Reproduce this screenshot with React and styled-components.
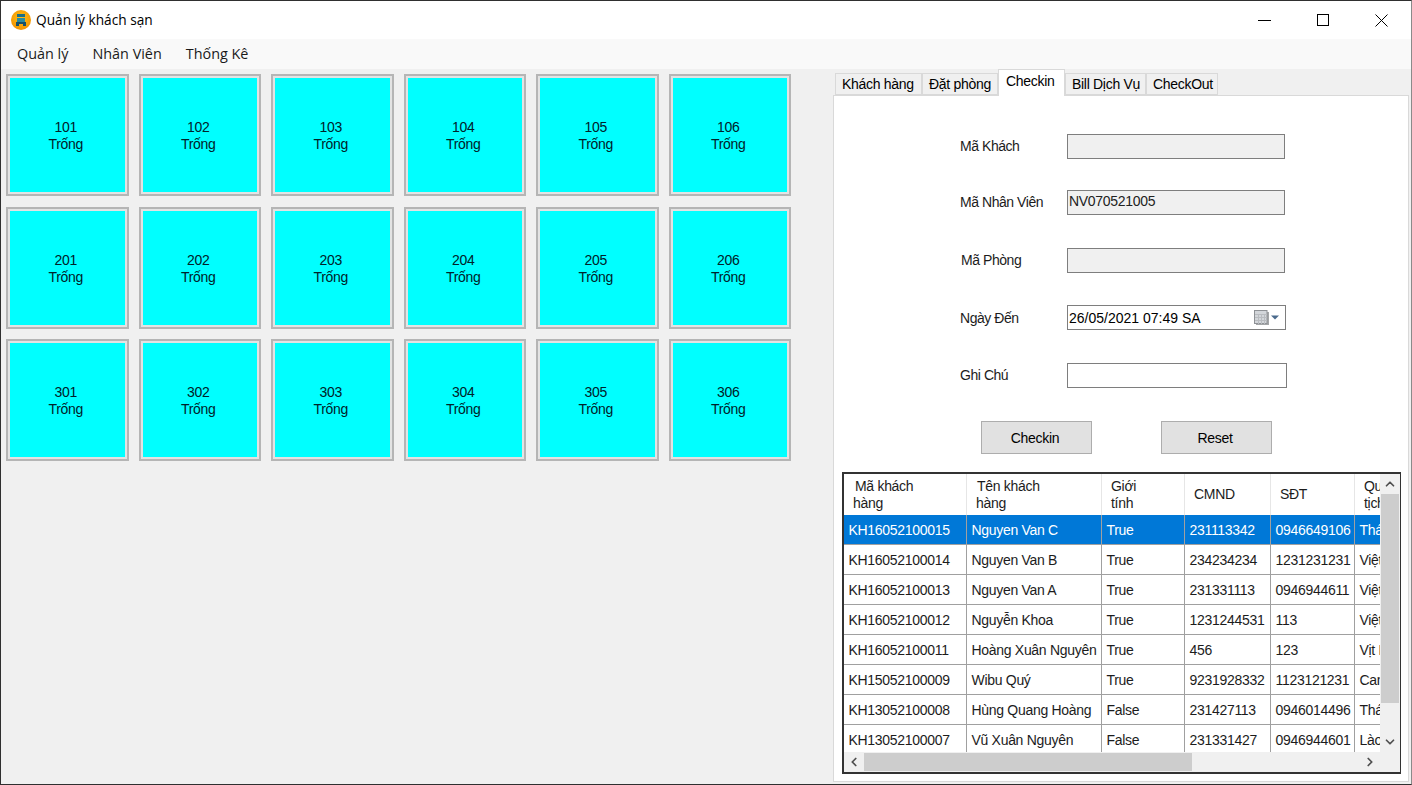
import styled, { createGlobalStyle } from "styled-components";
import { ChevronUp, ChevronDown, ChevronLeft, ChevronRight } from "lucide-react";

const floors = [
    ["101", "102", "103", "104", "105", "106"],
    ["201", "202", "203", "204", "205", "206"],
    ["301", "302", "303", "304", "305", "306"],
];

const tabs = [
    { label: "Khách hàng", width: 87 },
    { label: "Đặt phòng", width: 76 },
    { label: "Checkin", width: 67, active: true },
    { label: "Bill Dịch Vụ", width: 81 },
    { label: "CheckOut", width: 72 },
];

const columns = [
    { lines: ["Mã khách", "hàng"], width: 123, indent: 2 },
    { lines: ["Tên khách", "hàng"], width: 135, indent: 1 },
    { lines: ["Giới", "tính"], width: 83, indent: 0 },
    { lines: ["CMND"], width: 86, indent: 0 },
    { lines: ["SĐT"], width: 84, indent: 0 },
    { lines: ["Quốc", "tịch"], width: 60, indent: 0 },
];

const customers = [
    ["KH16052100015", "Nguyen Van C", "True", "231113342", "0946649106", "Thái Lan"],
    ["KH16052100014", "Nguyen Van B", "True", "234234234", "1231231231", "Việt Nam"],
    ["KH16052100013", "Nguyen Van A", "True", "231331113", "0946944611", "Việt Nam"],
    ["KH16052100012", "Nguyễn Khoa", "True", "1231244531", "113", "Việt Nam"],
    ["KH16052100011", "Hoàng Xuân Nguyên", "True", "456", "123", "Vịt Nam"],
    ["KH15052100009", "Wibu Quý", "True", "9231928332", "1123121231", "Canada"],
    ["KH13052100008", "Hùng Quang Hoàng", "False", "231427113", "0946014496", "Thái Lan"],
    ["KH13052100007", "Vũ Xuân Nguyên", "False", "231331427", "0946944601", "Lào"],
];

const Logo = () => (
    <svg width="20" height="20" viewBox="0 0 20 20">
        <defs>
            <radialGradient id="logoFill" cx="50%" cy="40%" r="60%">
                <stop offset="0%" stopColor="#ffc21a" />
                <stop offset="100%" stopColor="#f39200" />
            </radialGradient>
        </defs>
        <circle cx="10" cy="10" r="10" fill="url(#logoFill)" />
        <rect x="6" y="4" width="8" height="3" fill="#1d6f86" />
        <rect x="6" y="8" width="8" height="4" fill="#2a8ca0" />
        <rect x="5" y="12" width="10" height="2" fill="#17506b" />
        <rect x="5" y="14" width="3" height="2" fill="#17506b" />
        <rect x="12" y="14" width="3" height="2" fill="#17506b" />
    </svg>
);

const CalendarIcon = () => (
    <svg width="28" height="17" viewBox="0 0 28 17">
        <rect x="3" y="3" width="13" height="13" fill="#a4a6a8" />
        <rect x="1.500" y="1.500" width="12.500" height="13" fill="#d3d6da" stroke="#8f9296" />
        <path d="M2 5.500H14M2 8.500H14M2 11.500H14M5.500 5V15M8.500 5V15M11.500 5V15" stroke="#b9bcc0" strokeWidth="1" />
        <path d="M18 6.500H26L22 10.500Z" fill="#4a6a8c" />
    </svg>
);

const WindowIcon = ({ kind }) => (
    <svg width="13" height="13" viewBox="0 0 13 13" fill="none" stroke="#000" strokeWidth="1">
        {kind === "min" && <path d="M0 6.500H13" />}
        {kind === "max" && <rect x="0.500" y="0.500" width="11" height="11" />}
        {kind === "close" && <path d="M0.500 0.500L12.500 12.500M12.500 0.500L0.500 12.500" />}
    </svg>
);

const App = () => {
    return (
        <Window>
            <GlobalStyle />
            <TitleBar>
                <Logo />
                <Title>Quản lý khách sạn</Title>
                <WindowButtons>
                    <WindowButton><WindowIcon kind="min" /></WindowButton>
                    <WindowButton><WindowIcon kind="max" /></WindowButton>
                    <WindowButton><WindowIcon kind="close" /></WindowButton>
                </WindowButtons>
            </TitleBar>

            <MenuBar>
                <MenuItem>Quản lý</MenuItem>
                <MenuItem>Nhân Viên</MenuItem>
                <MenuItem>Thống Kê</MenuItem>
            </MenuBar>

            <Main>
                <Rooms>
                    {floors.flat().map((room) => (
                        <Room key={room}>
                            <span>{room}</span>
                            <span>Trống</span>
                        </Room>
                    ))}
                </Rooms>

                <Side>
                    <TabStrip>
                        {tabs.map((tab) => (
                            <Tab key={tab.label} $width={tab.width} $active={tab.active}>
                                {tab.label}
                            </Tab>
                        ))}
                    </TabStrip>

                    <Panel>
                        <Field $top={38}>
                            <Label>Mã Khách</Label>
                            <ReadOnlyBox />
                        </Field>
                        <Field $top={31}>
                            <Label>Mã Nhân Viên</Label>
                            <ReadOnlyBox>NV070521005</ReadOnlyBox>
                        </Field>
                        <Field $top={33}>
                            <Label $indent={1}>Mã Phòng</Label>
                            <ReadOnlyBox />
                        </Field>
                        <Field $top={32}>
                            <Label $drop>Ngày Đến</Label>
                            <DateBox>
                                26/05/2021 07:49 SA
                                <CalendarIcon />
                            </DateBox>
                        </Field>
                        <Field $top={33}>
                            <Label>Ghi Chú</Label>
                            <NoteBox />
                        </Field>

                        <Actions>
                            <ActionButton>Checkin</ActionButton>
                            <ActionButton>Reset</ActionButton>
                        </Actions>

                        <DataGrid>
                            <TableClip>
                                <Table>
                                    <colgroup>
                                        {columns.map((col) => (
                                            <col key={col.lines[0]} width={col.width} />
                                        ))}
                                    </colgroup>
                                    <thead>
                                        <tr>
                                            {columns.map((col) => (
                                                <HeadCell key={col.lines[0]} $indent={col.indent}>
                                                    {col.lines.map((line, i) => (
                                                        <span key={line}>
                                                            {i > 0 && <br />}
                                                            {line}
                                                        </span>
                                                    ))}
                                                </HeadCell>
                                            ))}
                                        </tr>
                                    </thead>
                                    <tbody>
                                        {customers.map((row, index) => (
                                            <tr key={row[0]}>
                                                {row.map((value, cell) => (
                                                    <Cell key={cell} $selected={index === 0}>
                                                        {value}
                                                    </Cell>
                                                ))}
                                            </tr>
                                        ))}
                                    </tbody>
                                </Table>
                            </TableClip>

                            <VerticalBar>
                                <ChevronUp size={14} strokeWidth={3} color="#505050" />
                                <VerticalThumb />
                                <ChevronDown size={14} strokeWidth={3} color="#505050" />
                            </VerticalBar>
                            <HorizontalBar>
                                <ChevronLeft size={14} strokeWidth={3} color="#505050" />
                                <HorizontalThumb />
                                <ChevronRight size={14} strokeWidth={3} color="#505050" />
                            </HorizontalBar>
                            <Corner />
                        </DataGrid>
                    </Panel>
                </Side>
            </Main>
        </Window>
    );
};

export default App;

const GlobalStyle = createGlobalStyle`
    html, body {
        margin: 0;
        padding: 0;
        background: #f0f0f0;
    }
`;

const Window = styled.div`
    box-sizing: border-box;
    width: 1412px;
    height: 785px;
    display: flex;
    flex-direction: column;
    overflow: hidden;
    border: 1px solid #2f2f2f;
    border-right-color: #8a8a8a;
    background: #f0f0f0;
    color: #000;
    font-family: "Liberation Sans", Arial, sans-serif;
    font-size: 14px;
    letter-spacing: -0.300px;
`;

const TitleBar = styled.div`
    box-sizing: border-box;
    height: 38px;
    display: flex;
    align-items: center;
    padding-left: 10px;
    background: #fff;
    flex-shrink: 0;
    letter-spacing: 0;
`;

const Title = styled.span`
    margin: 0 0 2px 5px;
    font-family: "Open Sans", sans-serif;
    font-size: 13.700px;
`;

const WindowButtons = styled.div`
    margin-left: auto;
    display: flex;
`;

const WindowButton = styled.div`
    width: 58.500px;
    height: 38px;
    display: flex;
    align-items: center;
    justify-content: center;
`;

const MenuBar = styled.div`
    box-sizing: border-box;
    height: 30px;
    display: flex;
    align-items: center;
    padding: 0 0 2px 16px;
    gap: 24px;
    background: #f9f9f9;
    flex-shrink: 0;
    letter-spacing: 0;
`;

const MenuItem = styled.span`
    font-family: "Open Sans", sans-serif;
    font-size: 14.400px;
    color: #1a1a1a;
`;

const Main = styled.div`
    flex: 1;
    display: flex;
    min-height: 0;
`;

const Rooms = styled.div`
    flex: 1;
    display: grid;
    grid-template-columns: repeat(6, 122.500px);
    grid-auto-rows: 122px;
    column-gap: 10px;
    row-gap: 10.500px;
    align-content: start;
    padding: 5px 0 0 5px;
`;

const Room = styled.div`
    box-sizing: border-box;
    display: flex;
    flex-direction: column;
    align-items: center;
    justify-content: center;
    padding: 2px 3px 0 0;
    border: 2px solid #b5b5b5;
    box-shadow: inset 0 0 0 2px #e3e3e3;
    background: #00ffff;
    line-height: 17px;
    color: #00222a;
`;

const Side = styled.div`
    width: 576px;
    margin-right: 2px;
    margin-bottom: 2px;
    display: flex;
    flex-direction: column;
`;

const TabStrip = styled.div`
    height: 26px;
    display: flex;
    align-items: flex-end;
    padding-left: 2px;
    flex-shrink: 0;
`;

const Tab = styled.div`
    box-sizing: border-box;
    position: relative;
    width: ${(p) => p.$width}px;
    height: ${(p) => (p.$active ? 27 : 22)}px;
    margin-bottom: ${(p) => (p.$active ? -1 : 0)}px;
    padding: ${(p) => (p.$active ? "3px 0 0 7px" : "2px 0 0 6px")};
    border: 1px solid #d9d9d9;
    border-bottom: ${(p) => (p.$active ? "none" : "1px solid #d9d9d9")};
    background: ${(p) => (p.$active ? "#fff" : "#f0f0f0")};
    line-height: 17px;
    white-space: nowrap;
    z-index: ${(p) => (p.$active ? 1 : 0)};
`;

const Panel = styled.div`
    box-sizing: border-box;
    flex: 1;
    border: 1px solid #d9d9d9;
    background: #fff;
    overflow: hidden;
`;

const Field = styled.div`
    display: flex;
    align-items: center;
    height: 25px;
    margin-top: ${(p) => p.$top}px;
    padding-left: 126px;
`;

const Label = styled.div`
    box-sizing: border-box;
    width: 107px;
    padding: 0 0 ${(p) => (p.$drop ? 0 : 2)}px ${(p) => p.$indent || 0}px;
    letter-spacing: -0.450px;
    color: #1c1c1c;
`;

const ReadOnlyBox = styled.div`
    box-sizing: border-box;
    width: 218px;
    height: 25px;
    padding: 2px 0 0 1px;
    border: 1px solid #7e7e7e;
    background: #f0f0f0;
    line-height: 17px;
    color: #222;
`;

const DateBox = styled.div`
    box-sizing: border-box;
    width: 219px;
    height: 25px;
    display: flex;
    align-items: center;
    justify-content: space-between;
    padding: 0 4px 0 1px;
    border: 1px solid #7e7e7e;
    background: #fff;
    letter-spacing: 0;
`;

const NoteBox = styled.div`
    box-sizing: border-box;
    width: 220px;
    height: 25px;
    border: 1px solid #7e7e7e;
    background: #fff;
`;

const Actions = styled.div`
    display: flex;
    gap: 69px;
    margin-top: 33px;
    padding-left: 147px;
`;

const ActionButton = styled.div`
    box-sizing: border-box;
    width: 111px;
    height: 33px;
    display: flex;
    align-items: center;
    justify-content: center;
    padding-right: 3px;
    border: 1px solid #adadad;
    background: #e1e1e1;
`;

const DataGrid = styled.div`
    box-sizing: border-box;
    width: 559px;
    height: 302px;
    margin: 18px 0 0 8px;
    display: grid;
    grid-template-columns: 536px 20px;
    grid-template-rows: 278px 20px;
    border: 2px solid #333;
    border-right-width: 1px;
    background: #f0f0f0;
`;

const TableClip = styled.div`
    overflow: hidden;
    background: #fff;
`;

const Table = styled.table`
    table-layout: fixed;
    width: 571px;
    border-collapse: separate;
    border-spacing: 0;
    font-size: 14px;
`;

const HeadCell = styled.th`
    box-sizing: border-box;
    height: 41px;
    padding: 0 0 0 9px;
    border-right: 1px solid #e6e6e6;
    background: #fff;
    font-weight: normal;
    text-align: left;
    text-indent: ${(p) => p.$indent}px;
    line-height: 17px;
    color: #1c1c1c;
    white-space: nowrap;
`;

const Cell = styled.td`
    box-sizing: border-box;
    height: 30px;
    padding: 1px 0 0 4.500px;
    border-right: 1px solid #a0a0a0;
    border-bottom: 1px solid #a0a0a0;
    background: ${(p) => (p.$selected ? "#0078d7" : "#fff")};
    color: ${(p) => (p.$selected ? "#fff" : "#1c1c1c")};
    white-space: nowrap;
    overflow: hidden;
`;

const VerticalBar = styled.div`
    display: flex;
    flex-direction: column;
    align-items: center;
    justify-content: space-between;
    padding: 3px 0;
    background: #f0f0f0;
`;

const VerticalThumb = styled.div`
    flex: 1;
    width: 18px;
    margin: 3px 0 32px;
    background: #cdcdcd;
`;

const HorizontalBar = styled.div`
    display: flex;
    align-items: center;
    padding: 0 3px;
    background: #f0f0f0;
`;

const HorizontalThumb = styled.div`
    width: 328px;
    height: 18px;
    margin: 0 auto 0 3px;
    background: #cdcdcd;
`;

const Corner = styled.div`
    background: #f0f0f0;
`;
